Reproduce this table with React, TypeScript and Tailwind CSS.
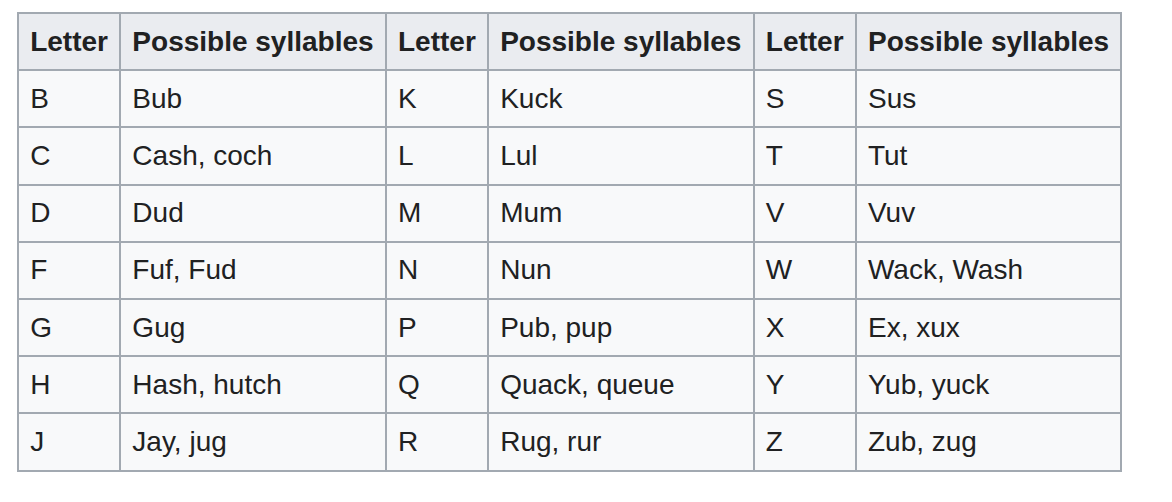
const rows: [string, string, string, string, string, string][] = [
  ["B", "Bub", "K", "Kuck", "S", "Sus"],
  ["C", "Cash, coch", "L", "Lul", "T", "Tut"],
  ["D", "Dud", "M", "Mum", "V", "Vuv"],
  ["F", "Fuf, Fud", "N", "Nun", "W", "Wack, Wash"],
  ["G", "Gug", "P", "Pub, pup", "X", "Ex, xux"],
  ["H", "Hash, hutch", "Q", "Quack, queue", "Y", "Yub, yuck"],
  ["J", "Jay, jug", "R", "Rug, rur", "Z", "Zub, zug"],
];

const headers = ["Letter", "Possible syllables", "Letter", "Possible syllables", "Letter", "Possible syllables"];

export default function App() {
  return (
    <div
      className="w-[1172px] h-[502px] bg-white pl-[17px] pt-[12px] text-[#202122]"
      style={{ fontFamily: '"Liberation Sans", Arial, sans-serif' }}
    >
      <table className="border-collapse border-2 border-[#a2a9b1] bg-[#f8f9fa] text-[28px] leading-[44px] whitespace-nowrap">
        <thead>
          <tr>
            {headers.map((h, i) => (
              <th
                key={i}
                className="border-2 border-[#a2a9b1] bg-[#eaecf0] px-[11.2px] py-[5.6px] text-left font-bold"
              >
                {h}
              </th>
            ))}
          </tr>
        </thead>
        <tbody>
          {rows.map((r, ri) => (
            <tr key={ri}>
              {r.map((c, ci) => (
                <td key={ci} className="border-2 border-[#a2a9b1] px-[11.2px] py-[5.6px] font-normal">
                  {c}
                </td>
              ))}
            </tr>
          ))}
        </tbody>
      </table>
    </div>
  );
}
